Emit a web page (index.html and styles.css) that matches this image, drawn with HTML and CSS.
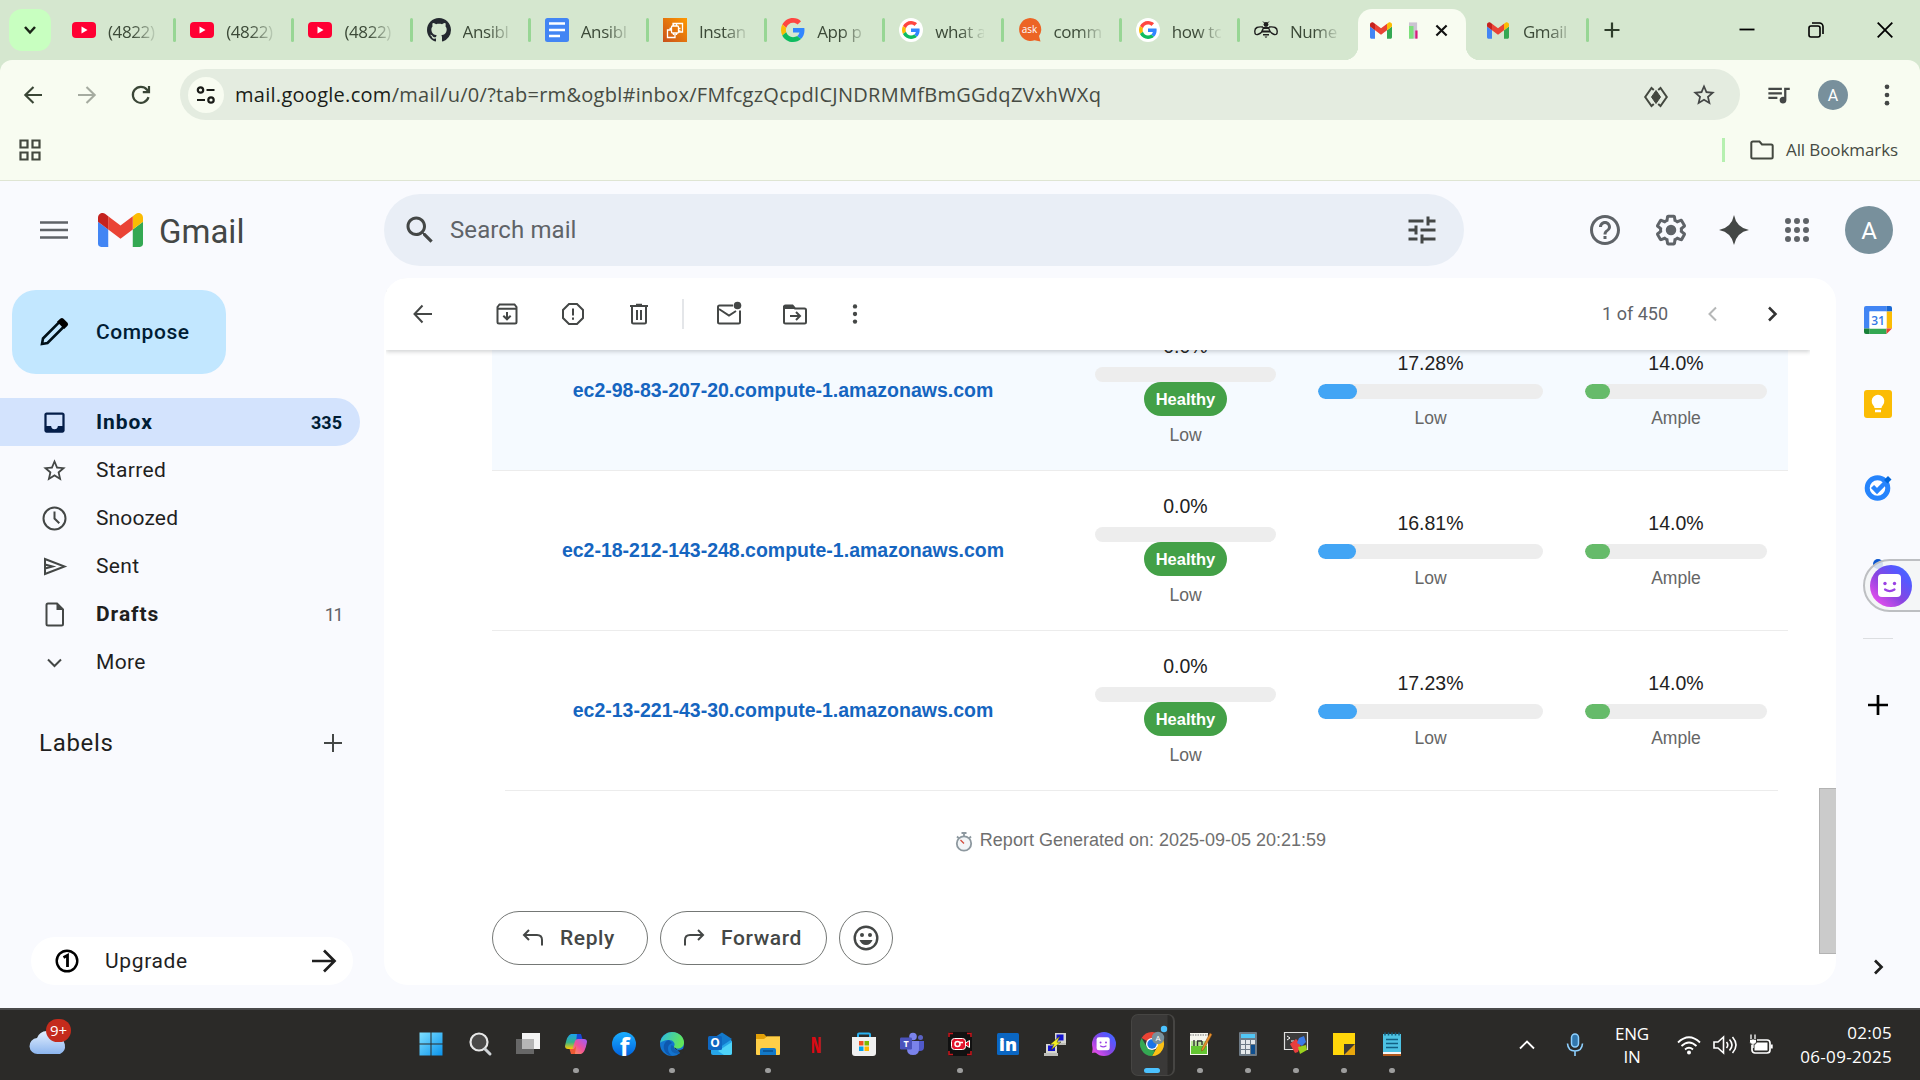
FILE: index.html
```html
<!DOCTYPE html>
<html lang="en">
<head>
<meta charset="utf-8">
<title>Gmail</title>
<link rel="stylesheet" href="styles.css">
</head>
<body>
<svg class="defs" aria-hidden="true">
  <symbol id="youtube" viewBox="0 0 24 16"><rect width="24" height="16" rx="4" fill="#ff0033"/><path d="M9.500 4.500v7l6-3.500z" fill="#fff"/></symbol>
  <symbol id="google" viewBox="0 0 48 48"><path fill="#ff4641" d="M24 9.500c3.540 0 6.710 1.220 9.210 3.600l6.850-6.850C35.900 2.380 30.470 0 24 0 14.620 0 6.510 5.380 2.560 13.220l7.980 6.190C12.430 13.720 17.740 9.500 24 9.500z"/><path fill="#3186ff" d="M46.980 24.550c0-1.570-.15-3.090-.38-4.550H24v9.020h12.940c-.58 2.960-2.260 5.480-4.780 7.180l7.730 6c4.510-4.180 7.090-10.360 7.090-17.650z"/><path fill="#fbbc05" d="M10.530 28.590c-.48-1.450-.76-2.990-.76-4.590s.27-3.140.76-4.590l-7.980-6.190C.92 16.460 0 20.120 0 24c0 3.880.92 7.540 2.560 10.780l7.970-6.190z"/><path fill="#0ebc5f" d="M24 48c6.480 0 11.930-2.130 15.890-5.810l-7.730-6c-2.150 1.450-4.920 2.300-8.160 2.300-6.260 0-11.570-4.220-13.470-9.910l-7.980 6.190C6.510 42.620 14.620 48 24 48z"/></symbol>
  <symbol id="google-round" viewBox="0 0 24 24"><circle cx="12" cy="12" r="12" fill="#fff"/><use href="#google" x="3" y="3" width="18" height="18"/></symbol>
  <symbol id="gmail" viewBox="52 42 88 66"><path fill="#4285f4" d="M58 108h14V74L52 59v43c0 3.320 2.690 6 6 6"/><path fill="#34a853" d="M120 108h14c3.320 0 6-2.690 6-6V59l-20 15"/><path fill="#fbbc04" d="M120 48v26l20-15v-8c0-7.420-8.470-11.650-14.400-7.200"/><path fill="#ea4335" d="M72 74V48l24 18 24-18v26L96 92"/><path fill="#c5221f" d="M52 51v8l20 15V48l-5.600-4.200c-5.940-4.450-14.400-.22-14.400 7.200"/></symbol>
  <symbol id="star" viewBox="0 0 24 24"><path d="M22 9.240l-7.190-.62L12 2 9.190 8.630 2 9.240l5.460 4.730L5.820 21 12 17.270 18.180 21l-1.630-7.030L22 9.240zM12 15.400l-3.760 2.270 1-4.280-3.320-2.880 4.380-.38L12 6.100l1.710 4.040 4.380.38-3.320 2.880 1 4.280L12 15.400z"/></symbol>
  <symbol id="kebab" viewBox="0 0 24 24"><circle cx="12" cy="5" r="2"/><circle cx="12" cy="12" r="2"/><circle cx="12" cy="19" r="2"/></symbol>
  <symbol id="assistant" viewBox="0 0 42 42"><linearGradient id="asg" x1="0" y1="1" x2="1" y2="0"><stop offset=".08" stop-color="#f04fee"/><stop offset=".45" stop-color="#8a45e0"/><stop offset=".75" stop-color="#5658ff"/><stop offset="1" stop-color="#3a76ff"/></linearGradient><circle cx="21" cy="21" r="21" fill="url(#asg)"/><rect x="8" y="9" width="23" height="23" rx="4" fill="#fff"/><g fill="#9a42e4"><circle cx="15" cy="18.500" r="1.700"/><circle cx="24.500" cy="18.500" r="1.700"/></g><path d="M15 24.500q4.700 3.200 9.500 0" fill="none" stroke="#9a42e4" stroke-width="2.200" stroke-linecap="round"/></symbol>
</svg>

<div class="tabstrip">
  <div class="tab-search"><svg width="16" height="16" viewBox="0 0 16 16" class="line"><path d="M3 5l5 5.500L13 5" stroke="#1a2417" stroke-width="2.500"/></svg></div>
  <div class="tab"><svg class="fav"><use href="#youtube" y="4" height="16"/></svg><span>(4822)</span></div>
  <div class="tab"><svg class="fav"><use href="#youtube" y="4" height="16"/></svg><span>(4822)</span></div>
  <div class="tab"><svg class="fav"><use href="#youtube" y="4" height="16"/></svg><span>(4822)</span></div>
  <div class="tab"><svg class="fav" viewBox="0 0 16 16"><path fill="#24292f" d="M8 0C3.580 0 0 3.580 0 8c0 3.540 2.290 6.530 5.470 7.590.4.070.55-.17.55-.38 0-.19-.01-.82-.01-1.490-2.010.37-2.530-.49-2.690-.94-.09-.23-.48-.94-.82-1.130-.28-.15-.68-.52-.01-.53.63-.01 1.080.58 1.230.82.72 1.210 1.870.87 2.330.66.07-.52.28-.87.51-1.070-1.780-.2-3.640-.89-3.640-3.950 0-.87.31-1.590.82-2.150-.08-.2-.36-1.020.08-2.120 0 0 .67-.21 2.200.82.64-.18 1.320-.27 2-.27.68 0 1.360.09 2 .27 1.530-1.040 2.200-.82 2.200-.82.44 1.100.16 1.920.08 2.120.51.56.82 1.270.82 2.150 0 3.070-1.870 3.750-3.650 3.950.29.25.54.73.54 1.480 0 1.070-.01 1.930-.01 2.200 0 .21.15.46.55.38A8.010 8.010 0 0 0 16 8c0-4.420-3.580-8-8-8z"/></svg><span>Ansibl</span></div>
  <div class="tab"><svg class="fav" viewBox="0 0 24 24"><rect width="24" height="24" rx="2.500" fill="#4285f4"/><path d="M4 5.500h16M4 12h16M4 18h11" stroke="#fff" stroke-width="2.600"/></svg><span>Ansibl</span></div>
  <div class="tab"><svg class="fav" viewBox="0 0 24 24"><linearGradient id="ec2" x1="0" y1="1" x2="1" y2="0"><stop stop-color="#c8511b"/><stop offset="1" stop-color="#f90"/></linearGradient><rect width="24" height="24" fill="url(#ec2)"/><g fill="none" stroke="#fff" stroke-width="1.300"><rect x="8.500" y="8" width="7" height="7" rx="1"/><path d="M10 8V5.500h9.500V14H16M8 12H4.500v7.500H12V16M10.500 6v2m3-2v2m-3 7v2m3-2v2M6.500 10.500h2m7 0h2m-2 2.500h2"/></g></svg><span>Instan</span></div>
  <div class="tab"><svg class="fav"><use href="#google"/></svg><span>App p</span></div>
  <div class="tab"><svg class="fav"><use href="#google-round"/></svg><span>what a</span></div>
  <div class="tab"><svg class="fav" viewBox="0 0 24 24"><path d="M12 0a11.300 11.300 0 0 1 9 18l1.500 5.500-6-1.200A11.500 11.500 0 1 1 12 0z" fill="#ec6424"/><text x="11.500" y="15" text-anchor="middle" class="ic-text" font-size="10" fill="#fff">ask</text></svg><span>comm</span></div>
  <div class="tab"><svg class="fav"><use href="#google-round"/></svg><span>how to</span></div>
  <div class="tab before-active"><svg class="fav" viewBox="0 0 24 24"><g fill="none" stroke="#1f1f1f" stroke-width="1.400"><path d="M9 9Q1 8 .8 13t4 3Q8 15 9 11M15 9q8-1 8.200 4t-4 3q-3-1-4.200-5"/></g><g fill="#1f1f1f"><circle cx="12" cy="6.500" r="2.400"/><path d="M8.500 9h7v2h-7zM8 12.500h8v2H8zM9 16h6v1.500H9zM10.500 18.500h3L12 20z"/><path d="M9 3.500l2 2M15 3.500l-2 2" stroke="#1f1f1f"/></g></svg><span>Nume</span></div>
  <div class="tab active"><svg width="22" height="17"><use href="#gmail"/></svg><svg class="chart" width="9" height="19" viewBox="0 0 10 20"><path fill="#cbc3d2" d="M0 1h9v18H0z"/><path fill="#7be07b" d="M0 5h5v14H0z"/><path fill="#d81b7a" d="M7 10h2.500v9H7z"/></svg><svg width="13" height="13" viewBox="0 0 14 14" class="line"><path d="M1.500 1.500l11 11m0-11l-11 11" stroke="#111" stroke-width="2.300"/></svg></div>
  <div class="tab last"><svg width="22" height="17"><use href="#gmail"/></svg><span>Gmail</span></div>
  <div class="new-tab"><svg width="16" height="16" viewBox="0 0 16 16" class="line"><path d="M8 .5v15M.5 8h15" stroke="#2e3d2b" stroke-width="2.200"/></svg></div>
  <div class="window-controls">
    <svg width="16" height="16" viewBox="0 0 16 16" class="line"><path d="M.5 7.500h15" stroke="#000" stroke-width="1.800"/></svg>
    <svg width="16" height="16" viewBox="0 0 16 16" class="line"><rect x="1" y="4" width="11" height="11" rx="2" stroke="#000" stroke-width="1.600"/><path d="M4 1h7.500a3.500 3.500 0 0 1 3.500 3.500V12" stroke="#000" stroke-width="1.600"/></svg>
    <svg width="16" height="16" viewBox="0 0 16 16" class="line"><path d="M.7.7l14.600 14.600m0-14.600L.7 15.300" stroke="#000" stroke-width="1.800"/></svg>
  </div>
</div>

<div class="browser-bar">
  <div class="address-row">
    <div class="nav">
      <svg width="20" height="20" viewBox="0 0 20 20" class="line"><path d="M19 10H3M10.500 2L2.300 10l8.200 8" stroke="#3a4636" stroke-width="2.100"/></svg>
      <svg width="20" height="20" viewBox="0 0 20 20" class="line"><path d="M1 10h16M9.500 2l8.200 8-8.200 8" stroke="#a5aba0" stroke-width="2.100"/></svg>
      <svg width="20" height="20" viewBox="0 0 20 20" class="line"><path d="M17.500 12.200A8 8 0 1 1 16 4.700l1.800 2.300M18 1v6.200h-6.200" stroke="#3a4636" stroke-width="2.200"/></svg>
    </div>
    <div class="omnibox">
      <div class="site-info"><svg width="20" height="20" viewBox="0 0 20 20" class="line"><g stroke="#1a1c18" stroke-width="2.200"><circle cx="4.500" cy="5" r="2.700"/><path d="M10.500 5h8M1 15h8"/><circle cx="15" cy="15" r="2.700"/></g></svg></div>
      <div class="url"><b>mail.google.com</b>/mail/u/0/?tab=rm&amp;ogbl#inbox/FMfcgzQcpdlCJNDRMMfBmGGdqZVxhWXq</div>
      <svg width="24" height="20" viewBox="0 0 24 20" class="line"><path d="M12 3.500l4.500 6.500-4.500 6.500L7.500 10z" fill="#43483f" stroke="#43483f"/><path d="M9.800 3L7.500 1 1.200 10l6.300 9 2.300-2M14.200 3l2.300-2 6.300 9-6.300 9-2.300-2" stroke="#43483f" stroke-width="2"/></svg>
      <svg class="fill" width="26" height="26"><use href="#star"/></svg>
    </div>
    <svg class="fill music" width="27" height="27" viewBox="0 0 24 24"><path d="M15 6H3v2h12V6zm0 4H3v2h12v-2zM3 16h8v-2H3v2zM17 6v8.180c-.31-.11-.65-.18-1-.18-1.660 0-3 1.340-3 3s1.340 3 3 3 3-1.340 3-3V8h3V6h-5z"/></svg>
    <div class="profile">A</div>
    <svg class="fill" width="28" height="28"><use href="#kebab"/></svg>
  </div>
  <div class="bookmarks">
    <svg width="22" height="22" viewBox="0 0 22 22" class="line"><path d="M1.500 1.500h7v7h-7zM13.500 1.500h7v7h-7zM1.500 13.500h7v7h-7zM13.500 13.500h7v7h-7z" stroke="#43483f" stroke-width="2.200"/></svg>
    <div class="all-bookmarks"><svg width="24" height="20" viewBox="0 0 24 20" class="line"><path d="M3 1.500h6.500l2.500 3h9.200q1.500 0 1.500 1.500v11q0 1.500-1.500 1.500H3q-1.700 0-1.700-1.500V3q0-1.500 1.700-1.500z" stroke="#43483f" stroke-width="2"/></svg><span>All Bookmarks</span></div>
  </div>
</div>

<div class="gmail">
  <div class="header">
    <svg class="menu line" width="28" height="18" viewBox="0 0 28 18"><path d="M0 1.500h28M0 9h28M0 16.500h28" stroke="#5f6368" stroke-width="2.700"/></svg>
    <svg class="logo" width="45" height="34"><use href="#gmail"/></svg>
    <span class="brand">Gmail</span>
    <div class="search">
      <svg class="fill" width="36" height="36" viewBox="0 0 24 24"><path d="M15.500 14h-.79l-.28-.27C15.410 12.590 16 11.110 16 9.500 16 5.910 13.090 3 9.500 3S3 5.910 3 9.500 5.910 16 9.500 16c1.610 0 3.090-.59 4.230-1.570l.27.28v.79l5 4.990L20.490 19l-4.990-5zm-6 0C7.010 14 5 11.990 5 9.500S7.010 5 9.500 5 14 7.010 14 9.500 11.990 14 9.500 14z"/></svg>
      <span>Search mail</span>
      <svg class="fill" width="36" height="36" viewBox="0 0 24 24"><path d="M3 17v2h6v-2H3zM3 5v2h10V5H3zm10 16v-2h8v-2h-8v-2h-2v6h2zM7 9v2H3v2h4v2h2V9H7zm14 4v-2H11v2h10zm-6-4h2V7h4V5h-4V3h-2v6z"/></svg>
    </div>
    <div class="header-actions">
      <svg width="36" height="36" viewBox="0 0 24 24"><path d="M11 18h2v-2h-2v2zm1-16C6.480 2 2 6.480 2 12s4.480 10 10 10 10-4.480 10-10S17.520 2 12 2zm0 18c-4.410 0-8-3.590-8-8s3.590-8 8-8 8 3.590 8 8-3.590 8-8 8zm0-14c-2.210 0-4 1.790-4 4h2c0-1.100.9-2 2-2s2 .9 2 2c0 2-3 1.750-3 5h2c0-2.250 3-2.500 3-5 0-2.210-1.790-4-4-4z"/></svg>
      <svg class="gear" width="36" height="36" viewBox="0 0 24 24"><path d="M13.850 22.250h-3.700c-.74 0-1.360-.54-1.450-1.270l-.27-1.890c-.27-.14-.53-.29-.79-.46l-1.800.72c-.7.26-1.470-.03-1.810-.65L2.200 15.530c-.35-.66-.2-1.440.36-1.880l1.530-1.190c-.01-.15-.02-.3-.02-.46 0-.15.01-.31.02-.46l-1.520-1.190c-.59-.45-.74-1.260-.37-1.880l1.850-3.190c.34-.62 1.110-.9 1.790-.63l1.810.73c.26-.17.52-.32.78-.46l.27-1.910c.09-.7.71-1.250 1.440-1.250h3.700c.74 0 1.360.54 1.450 1.270l.27 1.890c.27.14.53.29.79.46l1.800-.72c.71-.26 1.480.03 1.820.65l1.840 3.180c.36.66.2 1.440-.36 1.880l-1.520 1.190c.01.15.02.3.02.46s-.01.31-.02.46l1.520 1.190c.56.45.72 1.230.37 1.860l-1.860 3.220c-.34.62-1.110.9-1.800.63l-1.800-.72c-.26.17-.52.32-.78.46l-.27 1.910c-.1.68-.72 1.220-1.460 1.220zm-3.230-2h2.760l.37-2.550.53-.22c.44-.18.88-.44 1.340-.78l.45-.34 2.380.96 1.380-2.400-2.030-1.580.07-.56c.03-.26.06-.51.06-.78s-.03-.53-.06-.78l-.07-.56 2.030-1.580-1.390-2.400-2.390.96-.45-.35c-.42-.32-.87-.58-1.330-.77l-.52-.22-.37-2.550h-2.760l-.37 2.550-.53.21c-.44.19-.88.44-1.340.79l-.45.33-2.380-.95-1.390 2.390 2.030 1.580-.07.56a7 7 0 0 0-.06.79c0 .26.02.53.06.78l.07.56-2.030 1.580 1.380 2.400 2.390-.96.45.35c.43.33.86.58 1.330.77l.53.22.38 2.550z"/><circle cx="12" cy="12" r="3.500"/></svg>
      <svg width="36" height="36" viewBox="0 0 24 24"><path fill="#444746" d="M12 2q1.600 8.400 10 10-8.400 1.600-10 10-1.600-8.400-10-10Q10.400 10.400 12 2z"/></svg>
      <svg width="36" height="36" viewBox="0 0 24 24"><g stroke="#5f6368" stroke-width="4" stroke-linecap="round"><path d="M6 6h0M12 6h0M18 6h0M6 12h0M12 12h0M18 12h0M6 18h0M12 18h0M18 18h0"/></g></svg>
    </div>
    <div class="avatar">A</div>
  </div>

  <div class="body">
    <div class="sidebar">
      <div class="compose"><svg width="30" height="30" viewBox="0 0 30 30"><path d="M3 27l1-5.500L20.800 4.700l4.500 4.500L8.500 26z" fill="none" stroke="#001018" stroke-width="2.600"/><path d="M18 4.800L21.500 1.500q1.500-1 3 .2l4 4q1.300 1.600 0 3L25.200 12z"/></svg><span>Compose</span></div>
      <div class="item selected"><svg width="27" height="27" viewBox="0 0 24 24"><path fill="#041e49" d="M19 3H4.990c-1.110 0-1.980.89-1.980 2L3 19c0 1.100.88 2 1.990 2H19c1.100 0 2-.9 2-2V5c0-1.110-.9-2-2-2zm0 12h-4c0 1.660-1.350 3-3 3s-3-1.340-3-3H4.990V5H19v10z"/></svg><span>Inbox</span><i>335</i></div>
      <div class="item"><svg class="fill" width="27" height="27"><use href="#star"/></svg><span>Starred</span></div>
      <div class="item snoozed"><svg width="27" height="27" viewBox="0 0 27 27" class="line ink"><circle cx="13.500" cy="13.500" r="11"/><path d="M13.500 6.500v7l4.800 4.800"/></svg><span>Snoozed</span></div>
      <div class="item"><svg width="27" height="27" viewBox="0 0 27 27" class="line ink"><path d="M4 6v15l19.500-7.500zM4 11.500l7.500 2L4 15.500"/></svg><span>Sent</span></div>
      <div class="item drafts"><svg width="27" height="27" viewBox="0 0 27 27" class="line ink"><path d="M7 2.500h9l6 6V23q0 1.500-1.500 1.500h-13.500Q5.500 24.500 5.500 23V4q0-1.500 1.500-1.500z"/><path d="M15.500 2.500v6.500H22z" fill="#444746" stroke="none"/></svg><span>Drafts</span><i>11</i></div>
      <div class="item"><svg width="27" height="27" viewBox="0 0 27 27" class="line ink"><path d="M7 10.500l6.500 6.500 6.500-6.500"/></svg><span>More</span></div>
      <div class="labels"><span>Labels</span><svg width="18" height="18" viewBox="0 0 18 18" class="line ink"><path d="M9 0v18M0 9h18"/></svg></div>
      <div class="upgrade"><svg width="24" height="24" viewBox="0 0 24 24" class="line"><circle cx="12" cy="12" r="10.300" stroke="#000" stroke-width="2.400"/><path d="M8.500 8.500l4-2.200V18" stroke="#000" stroke-width="2.800"/></svg><span>Upgrade</span><svg width="24" height="24" viewBox="0 0 24 24" class="line"><path d="M0 12h22M12 1.500L22.500 12 12 22.500" stroke="#1f1f1f" stroke-width="2.700"/></svg></div>
    </div>

    <div class="panel">
      <div class="mail-toolbar">
        <svg width="24" height="24" viewBox="0 0 24 24" class="line ink"><path d="M21 12H4M11.500 3.500L3.500 12l8 8.500"/></svg>
        <svg class="archive line ink" width="24" height="24" viewBox="0 0 24 24"><path d="M2.500 5l2-2.500h15l2 2.500v15q0 1.500-1.500 1.500H4q-1.500 0-1.500-1.500zM2.500 6.700h19M12 10v7M8.300 13.700L12 17.300l3.700-3.600"/></svg>
        <svg width="24" height="24" viewBox="0 0 24 24" class="line ink"><path d="M8 2h8l6 6v8l-6 6H8l-6-6V8z"/><path d="M12 6.500v7M12 15.500v2.300"/></svg>
        <svg width="24" height="24" viewBox="0 0 24 24" class="line ink"><path d="M3 4h18M9 2.800h6M5 4.500V20q0 1.500 1.500 1.500h11q1.500 0 1.500-1.500V4.500M10 8v10M14 8v10"/></svg>
        <i class="divider"></i>
        <svg width="26" height="26" viewBox="0 0 26 26" class="line ink"><path d="M17 4.500H3.500q-1.500 0-1.500 1.500v15q0 1.500 1.500 1.500h19q1.500 0 1.500-1.500V9.500M3 8l10 6.500L20 10"/><circle cx="21.500" cy="4.500" r="3.800" fill="#444746" stroke="none"/></svg>
        <svg class="move line ink" width="26" height="26" viewBox="0 0 26 26"><path d="M2 5v16q0 1.500 1.500 1.500h19q1.500 0 1.500-1.500V9q0-1.500-1.500-1.500H13L10.500 4.500h-7Q2 4.500 2 6z"/><path d="M2 4h8.500l3 4H2z" fill="#444746" stroke="none"/><path d="M8 15h9.500M14 11l4 4-4 4"/></svg>
        <svg class="fill" width="26" height="26"><use href="#kebab"/></svg>
        <span class="count">1 of 450</span>
        <svg width="20" height="20" viewBox="0 0 20 20" class="line"><path d="M13 3.500L6.500 10l6.500 6.500" stroke="#b5b7b7" stroke-width="2"/></svg>
        <svg class="next line" width="20" height="20" viewBox="0 0 20 20"><path d="M7 3.500l6.500 6.500L7 16.500" stroke="#333" stroke-width="2.500"/></svg>
      </div>
      <div class="message">
        <div class="report">
          <div class="row shaded">
            <div class="host">ec2-98-83-207-20.compute-1.amazonaws.com</div>
            <div class="metric"><p>0.0%</p><div class="bar"></div><em>Healthy</em><small>Low</small></div>
            <div class="metric"><p>17.28%</p><div class="bar"><div class="blue" style="width:17.280%"></div></div><small>Low</small></div>
            <div class="metric"><p>14.0%</p><div class="bar"><div class="green" style="width:14%"></div></div><small>Ample</small></div>
          </div>
          <div class="row">
            <div class="host">ec2-18-212-143-248.compute-1.amazonaws.com</div>
            <div class="metric"><p>0.0%</p><div class="bar"></div><em>Healthy</em><small>Low</small></div>
            <div class="metric"><p>16.81%</p><div class="bar"><div class="blue" style="width:16.810%"></div></div><small>Low</small></div>
            <div class="metric"><p>14.0%</p><div class="bar"><div class="green" style="width:14%"></div></div><small>Ample</small></div>
          </div>
          <div class="row final">
            <div class="host">ec2-13-221-43-30.compute-1.amazonaws.com</div>
            <div class="metric"><p>0.0%</p><div class="bar"></div><em>Healthy</em><small>Low</small></div>
            <div class="metric"><p>17.23%</p><div class="bar"><div class="blue" style="width:17.230%"></div></div><small>Low</small></div>
            <div class="metric"><p>14.0%</p><div class="bar"><div class="green" style="width:14%"></div></div><small>Ample</small></div>
          </div>
          <div class="rule"></div>
        </div>
        <div class="generated"><svg width="20" height="20" viewBox="0 0 20 20" class="line"><circle cx="10" cy="11.500" r="7.200" fill="#f2f5f7" stroke="#8d989f" stroke-width="1.800"/><path d="M10 4V1M7.500 1h5M3 4.500l1.700 1.700M17 4.500l-1.700 1.700" stroke="#8d989f" stroke-width="1.800"/><path d="M10 11.500L6.500 8" stroke="#d34a3a" stroke-width="1.300"/></svg><span>Report Generated on: 2025-09-05 20:21:59</span></div>
        <div class="actions">
          <div class="button reply"><svg width="24" height="24" viewBox="0 0 24 24" class="line ink"><path d="M8 4L3 9l5 5M3.500 9H16q5 0 5 5v5.500"/></svg><span>Reply</span></div>
          <div class="button forward"><svg width="24" height="24" viewBox="0 0 24 24" class="line ink"><path d="M16 4l5 5-5 5M20.500 9H8q-5 0-5 5v5.500"/></svg><span>Forward</span></div>
          <div class="button emoji"><svg width="26" height="26" viewBox="0 0 26 26" class="line"><circle cx="13" cy="13" r="11.300" stroke="#444746" stroke-width="2.400"/><g fill="#444746"><circle cx="9" cy="10" r="2"/><circle cx="17" cy="10" r="2"/><path d="M6.500 15h13q-2 5-6.500 5t-6.500-5z"/></g></svg></div>
        </div>
        <div class="scrollbar"></div>
      </div>
    </div>

    <div class="sidepanel">
      <svg width="28" height="28" viewBox="0 0 28 28"><path fill="#4285f4" d="M2 0h20.500v5.500h-17v17H0V2q0-2 2-2z"/><path fill="#1967d2" d="M22.500 0H26q2 0 2 2v3.500h-5.500z"/><path fill="#fbbc04" d="M22.500 5.500H28v17h-5.500z"/><path fill="#34a853" d="M5.500 22.500h17V28h-17z"/><path fill="#188038" d="M0 22.500h5.500V28H2q-2 0-2-2z"/><path fill="#ea4335" d="M22.500 28v-5.500H28z"/><path fill="#fff" d="M5.500 5.500h17v17h-17z"/><text x="14" y="18.500" text-anchor="middle" class="ic-text" font-weight="600" font-size="12" fill="#3478e5">31</text></svg>
      <svg width="28" height="28" viewBox="0 0 28 28"><rect width="28" height="28" rx="3" fill="#fbbc04"/><path d="M10.500 18q0-1.500-1.500-3a6.300 6.300 0 1 1 10 0q-1.500 1.500-1.500 3zM11 19.800h6v2.400h-6z" fill="#fff"/></svg>
      <svg class="tasks line" width="28" height="28" viewBox="0 0 28 28"><circle cx="13.500" cy="15" r="10.300" stroke="#2684fc" stroke-width="5" fill="#fff"/><path d="M8.500 13.500l4.500 4.500 10-10" stroke="#2684fc" stroke-width="4.500"/><path d="M20 7l4-4 3.500 3.500-4 4z" fill="#0066da"/></svg>
      <div class="contacts"><i></i><div class="float"><svg width="42" height="42"><use href="#assistant"/></svg></div></div>
      <hr>
      <svg class="add line" width="20" height="20" viewBox="0 0 20 20"><path d="M10 0v20M0 10h20" stroke="#000" stroke-width="2.700"/></svg>
      <svg class="hide line" width="18" height="18" viewBox="0 0 18 18"><path d="M6 2.500L12.500 9 6 15.500" stroke="#1f1f1f" stroke-width="2.700"/></svg>
    </div>
  </div>
</div>

<div class="taskbar">
  <div class="weather"><svg width="40" height="32" viewBox="0 0 40 32"><linearGradient id="cl" x1="0" y1="0" x2="0" y2="1"><stop stop-color="#e3efff"/><stop offset="1" stop-color="#8cb5ee"/></linearGradient><path d="M9 28a8 8 0 0 1-1-16 11 11 0 0 1 20-1 9 9 0 0 1 3 17z" fill="url(#cl)"/></svg><b>9+</b></div>
  <div class="apps">
    <div class="app start"><svg viewBox="0 0 24 24"><linearGradient id="wn" x1="0" y1="0" x2="1" y2="1"><stop stop-color="#7fe0ff"/><stop offset="1" stop-color="#0a93ec"/></linearGradient><path d="M.5.500h11v11H.5zM12.500.500h11v11h-11zM.5 12.500h11v11H.5zM12.500 12.500h11v11h-11z" fill="url(#wn)"/></svg></div>
    <div class="app"><svg viewBox="0 0 24 24"><circle cx="11" cy="10" r="8.500" fill="#4b4a49" stroke="#e8e8e8" stroke-width="2.200"/><path d="M17 17l5 5" stroke="#cfd3d6" stroke-width="3" stroke-linecap="round"/></svg></div>
    <div class="app"><svg viewBox="0 0 24 24"><path d="M6 1h18v16H6z" fill="#f3f3f3"/><path d="M0 7h18v15H0z" fill="#707070" opacity=".88"/><path d="M6 7h12v10H6z" fill="#b5b5b5"/></svg></div>
    <div class="app dot"><svg viewBox="0 0 24 24"><linearGradient id="cpa" x1="0" y1="0" x2="0" y2="1"><stop stop-color="#1aa2ee"/><stop offset=".55" stop-color="#38b48a"/><stop offset="1" stop-color="#ffc900"/></linearGradient><linearGradient id="cpb" x1="1" y1="0" x2="0" y2="1"><stop stop-color="#9a5cff"/><stop offset=".5" stop-color="#f0519a"/><stop offset="1" stop-color="#ffa34d"/></linearGradient><path d="M7 2h10l-4 13q-.8 2-3 2H4q-3 0-3-3 2-11 6-12z" fill="url(#cpa)"/><path d="M13 2h4l1.500 5H14l-2 3z" fill="#1648d8"/><path d="M17 22H7l4-13q.8-2 3-2h6q3 0 3 3-2 11-6 12z" fill="url(#cpb)"/><path d="M11 22H7l-1.500-5H10l2-3z" fill="#ee5a34"/></svg></div>
    <div class="app"><svg viewBox="0 0 24 24"><linearGradient id="fb" x1="0" y1="0" x2="0" y2="1"><stop stop-color="#1aafff"/><stop offset="1" stop-color="#0163e0"/></linearGradient><circle cx="12" cy="12" r="12" fill="url(#fb)"/><text x="12.500" y="24" text-anchor="middle" class="ic-text" font-weight="700" font-size="25" fill="#fff">f</text></svg></div>
    <div class="app dot"><svg viewBox="0 0 24 24"><linearGradient id="ed" x1="0" y1="0" x2="1" y2=".3"><stop stop-color="#2bb9e8"/><stop offset="1" stop-color="#62e65a"/></linearGradient><circle cx="12" cy="12" r="12" fill="#1374cf"/><path d="M.2 11A12 12 0 0 1 12 0c8 0 12 6 12 10.500 0 4-3 6-6.500 6-3 0-4-1-3.500-2 2-3-1-6.500-5-6.500-5 0-8 2-8.800 3z" fill="url(#ed)"/><path d="M9 8c-4 1-6 5-5 9s5 7 9 7c-3-1-5-4-5-7 0-4 2-5 4-6z" fill="#0e58ae"/><path d="M14 14.500c-.5 2 1 4 4 4 2 0 4-1 5-2L20.500 21q-4 2-8-1-3-3-1-7z" fill="#1160b4"/><path d="M14.500 15c0 2 1.500 3.200 4 3.200 2 0 3.500-.7 4.700-1.500l.8 3-3 2z" fill="#2b2a28"/></svg></div>
    <div class="app"><svg viewBox="0 0 24 24"><path d="M3 10L14 1l10 8v12q0 2-2 2H5q-2 0-2-2z" fill="#26a5e8"/><path d="M7 5l7-4.500L24 7 11 16z" fill="#1379cc"/><path d="M24 10L10 19l6 4h6q2 0 2-2z" fill="#4ed3f8"/><rect y="4" width="14" height="14" rx="1.500" fill="#0f67c1"/><text x="7" y="15.300" text-anchor="middle" class="ic-text" font-weight="700" font-size="12" fill="#fff">O</text></svg></div>
    <div class="app dot"><svg viewBox="0 0 24 24"><path d="M0 2h8l2.500 2.500H24V12H0z" fill="#e2a008"/><path d="M0 7h8l3-2.500h13V22q0 1-1 1H1q-1 0-1-1z" fill="#ffcf48"/><path d="M4 23v-5q0-2 2-2h12q2 0 2 2v5z" fill="#1279c9"/><path d="M7 19h10" stroke="#0a4f8c" stroke-width="1.500"/></svg></div>
    <div class="app"><svg viewBox="0 0 24 24"><text transform="scale(.55 1)" x="22" y="20.500" text-anchor="middle" class="ic-text" font-weight="800" font-size="23" fill="#d90a14">N</text></svg></div>
    <div class="app"><svg viewBox="0 0 24 24"><path d="M6 7V2.500q0-1 1-1h10q1 0 1 1V7" fill="none" stroke="#29b2f2" stroke-width="2"/><path d="M0 5h24v16q0 3-3 3H3q-3 0-3-3z" fill="#f0f0f0"/><path d="M7 9h4.500v4.500H7z" fill="#f25022"/><path d="M12.500 9H17v4.500h-4.500z" fill="#7fba00"/><path d="M7 14.500h4.500V19H7z" fill="#00a4ef"/><path d="M12.500 14.500H17V19h-4.500z" fill="#ffb900"/></svg></div>
    <div class="app"><svg viewBox="0 0 24 24"><circle cx="13" cy="4.500" r="3.800" fill="#7b83eb"/><circle cx="20.500" cy="5.500" r="2.500" fill="#5a62c3"/><path d="M17 9h7v6q0 4-4 4h-3z" fill="#5059c9"/><path d="M7 9h12v8q0 6-6 6t-6-6z" fill="#7b83eb"/><rect y="5.500" width="12" height="12" rx="1.200" fill="#4b53bc"/><text x="6" y="15" text-anchor="middle" class="ic-text" font-weight="700" font-size="9" fill="#fff">T</text></svg></div>
    <div class="app dot"><svg viewBox="0 0 24 24"><rect width="24" height="24" rx="2.500" fill="#111"/><path d="M1 5V1.500h4M19 1.500h4V5M1 19v3.500h4M19 22.500h4V19" fill="none" stroke="#c4161c" stroke-width="1.600"/><rect x="3.500" y="6.500" width="14" height="11" rx="3" fill="#e3142d" stroke="#fff"/><path d="M17.500 11l4-2.500v7l-4-2.500z" fill="#e3142d" stroke="#fff"/><circle cx="9.500" cy="12" r="2.500" fill="none" stroke="#fff" stroke-width="1.500"/><path d="M12 10.500h3" stroke="#fff" stroke-width="1.500"/></svg></div>
    <div class="app"><svg viewBox="0 0 24 24"><rect x="1" y="1" width="22" height="22" rx="1.500" fill="#0a66c2"/><text x="12" y="19" text-anchor="middle" class="ic-text" font-weight="800" font-size="18" fill="#fff">in</text></svg></div>
    <div class="app"><svg viewBox="0 0 24 24"><path d="M11 1h11v10H11zM2 12h11v9H2z" fill="#d5d5d0"/><path d="M12.500 2.500h7v6h-7zM4 13.500h7v5.500H4z" fill="#1212cf"/><path d="M10 11h12v2H10zM0 21h14v3H0z" fill="#bdbdb8"/><path d="M16 4L6 12.500l4-.2L7 18l10-8-4 .2z" fill="#f4ee22" stroke="#222" stroke-width=".5"/></svg></div>
    <div class="app"><svg viewBox="0 0 24 24"><path d="M1 14l-1 7 8-1z" fill="#d44bd9"/><use href="#assistant" width="24" height="24"/></svg></div>
    <div class="app current"><svg viewBox="0 0 24 24"><path d="M12 12L1.600 6A12 12 0 0 1 22.400 6z" fill="#ea4335"/><path d="M12 24l5.200-9L12 6h10.400A12 12 0 0 1 12 24z" fill="#fbc116"/><path d="M1.600 6l5.200 9 5.200 3 3 .8L12 24A12 12 0 0 1 1.600 6z" fill="#34a853"/><circle cx="12" cy="12" r="6" fill="#fff"/><circle cx="12" cy="12" r="4.700" fill="#1a73e8"/><circle cx="18" cy="6" r="6.200" fill="#78909c"/><text x="18" y="8.700" text-anchor="middle" class="ic-text" font-size="8" fill="#fff">A</text><circle cx="24" cy="-3" r="3.200" fill="#4cc2ff"/></svg></div>
    <div class="app dot"><svg viewBox="0 0 24 24"><path d="M2 1h18v22H2z" fill="#f6f6ee"/><path d="M3 9h16v13H3z" fill="#62c531"/><path d="M3 9h16v5H3z" fill="#b9e59a"/><path d="M6 8v6M9.500 9v5M14 9v4M9 9h5" stroke="#333" stroke-width="1.400"/><path d="M2 3h18" stroke="#777" stroke-dasharray="1.500 1"/><path d="M22 1l2 1.500L15.500 18l-2 1 .3-2.500z" fill="#e8902c" stroke="#7d4b16" stroke-width=".5"/></svg></div>
    <div class="app dot"><svg viewBox="0 0 24 24"><rect x="3" width="18" height="24" rx="1" fill="#6e7b87"/><path d="M5 2h14v4H5z" fill="#52c7f5"/><path d="M5 8h4v4H5zm5 0h4v4h-4zm5 0h4v4h-4zM5 13h4v4H5zm5 0h4v4h-4zM5 18h4v4H5zm5 0h4v4h-4z" fill="#e4e8eb"/><path d="M15 13h4v9h-4z" fill="#0f4f8f"/></svg></div>
    <div class="app dot"><svg viewBox="0 0 24 24"><path d="M.5.500h23v17H.5z" fill="#3b3b3b" stroke="#e0e0e0" stroke-width="1.200"/><path d="M3 4l3 2-3 2M7 9h3" stroke="#fff" fill="none"/><path d="M6 12l6-5 5 5-3 8-3 1z" fill="#e83e3e"/><path d="M15 6l5-2 2 6-4 4-5-3z" fill="#3b7be8"/><path d="M14 15l8-2 1 5-7 4z" fill="#9bd21e"/></svg></div>
    <div class="app dot"><svg viewBox="0 0 24 24"><path d="M1 1h22v11L12 23H1z" fill="#ffd60a"/><path d="M12 12h11v11H12z" fill="#e8a60c"/><path d="M12 12h11L12 23z" fill="#3d3a35"/></svg></div>
    <div class="app dot"><svg viewBox="0 0 24 24"><path d="M3 2h18v19H3z" fill="#4dc2e3"/><path d="M3 20h18v2H3z" fill="#f5f5f5"/><path d="M3 22h18v2H3z" fill="#b3591c"/><path d="M5 .5v3M8.500.500v3M12 .5v3M15.500.500v3M19 .5v3" stroke="#135b7b" stroke-width="1.500"/><path d="M6 7.500h12M6 11.500h12M6 15.500h12" stroke="#126184" stroke-width="1.600"/></svg></div>
  </div>
  <div class="tray">
    <svg class="up line" width="18" height="18" viewBox="0 0 18 18"><path d="M2 12.500L9 5.500l7 7" stroke="#fff" stroke-width="1.800"/></svg>
    <svg class="mic line" width="20" height="24" viewBox="0 0 20 24"><rect x="6.500" y="1" width="7" height="13" rx="3.500" fill="#3277ad" stroke="#8ed0ff" stroke-width="1.500"/><path d="M2.500 10.500q.5 7.500 7.500 7.500t7.500-7.500M10 18v5" stroke="#8ed0ff" stroke-width="1.600"/></svg>
    <div class="lang">ENG<br>IN</div>
    <svg class="wifi line" width="24" height="20" viewBox="0 0 24 20"><g stroke="#fff" stroke-width="1.800"><path d="M1 7.500q11-10.500 22 0M4.500 11q7.500-7 15 0M8 14.500q4-3.500 8 0"/></g><circle cx="12" cy="17.500" r="2" fill="#fff"/></svg>
    <svg class="vol line" width="24" height="20" viewBox="0 0 24 20"><g stroke="#fff" stroke-width="1.600"><path d="M1 7h4l5.500-5v16L5 13H1z"/><path d="M13.500 7q2.500 3 0 6M16.500 4.500q5 5.500 0 11M19.500 2q7 8 0 16"/></g></svg>
    <svg class="bat line" width="24" height="22" viewBox="0 0 24 22"><rect x="3" y="6" width="18" height="13" rx="3" stroke="#fff" stroke-width="1.700"/><path d="M5.500 8.500h13v8h-13z" fill="#fff"/><path d="M22.700 10.500v4" stroke="#fff" stroke-width="2"/><path d="M2 3v3M6 3v3M.500 5h7v3q0 2.500-3.500 2.500T.500 8z" fill="#fff" stroke="#2b2a28"/><path d="M2 .5V5M6 .5V5M4 10v4" stroke="#fff" stroke-width="1.300"/></svg>
    <div class="clock">02:05<br>06-09-2025</div>
  </div>
</div>
</body>
</html>
```

FILE: styles.css
```css
* { box-sizing: border-box; }
body { margin: 0; width: 1920px; height: 1080px; overflow: hidden; display: flex; flex-direction: column; font-family: Roboto, "Liberation Sans", sans-serif; color: #1f1f1f; background: #f9fafe; }
svg { display: block; flex: none; overflow: visible; }
i, em { font-style: normal; }
.defs { position: absolute; width: 0; height: 0; }
.line { fill: none; }
.ink { stroke: #444746; stroke-width: 2; }
.fill { fill: #444746; }
.ic-text { font-family: "Open Sans", sans-serif; }

/* tab strip */
.tabstrip { height: 60px; background: #d5e7cf; display: flex; align-items: center; font: 17px "Open Sans", sans-serif; color: #3c4a38; padding-left: 9px; }
.tab-search { width: 42px; height: 42px; border-radius: 13px; background: #c8ffc0; display: flex; align-items: center; justify-content: center; margin-right: 7px; }
.tab { width: 118.200px; height: 60px; flex: none; display: flex; align-items: center; padding-left: 14px; gap: 12px; }
.tab::after { content: ""; width: 3px; height: 24px; border-radius: 2px; background: #97d694; margin-left: auto; }
.fav { width: 24px; height: 24px; }
.tab span { width: 49px; margin-right: -5px; white-space: nowrap; letter-spacing: -.4px; padding-top: 2px; mask-image: linear-gradient(90deg, #000 50%, transparent 104%); }
.before-active { width: 118px; }
.before-active::after, .active::after { display: none; }
.active { width: 108px; height: 51px; align-self: flex-end; background: #f8fcf1; border-radius: 14px 14px 0 0; padding: 0 0 9px 12px; gap: 17px; position: relative; }
.active::before { content: ""; position: absolute; bottom: 0; left: -14px; right: -14px; height: 14px; background: radial-gradient(circle at 0 0, transparent 14px, #f8fcf1 14.500px) 0 0 / 14px 14px no-repeat, radial-gradient(circle at 14px 0, transparent 14px, #f8fcf1 14.500px) 100% 0 / 14px 14px no-repeat; }
.last { width: 123px; padding-left: 21px; gap: 14px; }
.new-tab { padding-left: 15px; }
.window-controls { margin-left: auto; display: flex; gap: 53px; padding-right: 27px; }

/* browser toolbar */
.tabstrip + .browser-bar { height: 121px; background: #f8fcf1; border-bottom: 1px solid #dfe5d3; border-radius: 12px 12px 0 0; box-shadow: 0 -12px 0 0 #d5e7cf; }
.tabstrip { position: relative; z-index: 1; clip-path: inset(0); }
.address-row { height: 69px; display: flex; align-items: center; padding: 0 19px 0 23px; }
.nav { display: flex; gap: 34px; width: 157px; flex: none; }
.omnibox { width: 1560px; height: 51px; flex: none; border-radius: 26px; background: #e4ece0; display: flex; align-items: center; padding: 0 23px 0 8px; margin-right: 25px; }
.site-info { width: 36px; height: 36px; border-radius: 50%; background: #f8fcf1; display: flex; align-items: center; justify-content: center; margin-right: 11px; }
.url { flex: 1; font: 20px "Open Sans", sans-serif; letter-spacing: .28px; color: #464b43; white-space: nowrap; }
.url b { font-weight: 400; color: #1a1c18; }
.omnibox > svg + svg { margin-left: 23px; }
.omnibox > .line { margin-top: 4px; }
.music { margin-right: 26px; }
.profile { width: 30px; height: 30px; border-radius: 50%; background: #78909c; color: #fff; font-size: 16px; line-height: 31px; text-align: center; margin-right: 25px; }
.bookmarks { height: 42px; display: flex; align-items: center; justify-content: space-between; padding: 0 22px 0 19px; }
.all-bookmarks { height: 24px; border-left: 3px solid #b6f0b0; display: flex; align-items: center; gap: 12px; padding-left: 25px; font: 17px "Open Sans", sans-serif; letter-spacing: -.1px; color: #464b43; }
.all-bookmarks span { margin-top: -2px; }

/* gmail header */
.gmail { flex: 1; display: flex; flex-direction: column; }
.header { height: 97px; display: flex; align-items: center; padding-left: 40px; }
.logo { margin: 0 16px 0 30px; }
.brand { width: 225px; font-size: 33px; color: #444746; padding-top: 3px; }
.search { width: 1080px; height: 72px; border-radius: 36px; background: #e9eef6; display: flex; align-items: center; padding: 0 24px 0 18px; color: #5f6368; font-size: 24px; letter-spacing: .1px; }
.search span { flex: 1; padding-left: 12px; }
.header-actions { display: flex; gap: 27px; margin-left: 123px; fill: #5f6368; }
.gear { margin-left: 3px; }
.avatar { width: 48px; height: 48px; border-radius: 50%; background: #78909c; color: #fff; font-size: 24px; line-height: 50px; text-align: center; margin-left: 30px; }
.body { display: flex; height: 730px; }

/* sidebar */
.sidebar { width: 384px; padding-top: 12px; display: flex; flex-direction: column; font-size: 21px; letter-spacing: .35px; }
.compose { width: 214px; height: 84px; flex: none; margin: 0 0 24px 12px; border-radius: 24px; background: #c2e7ff; color: #001d35; display: flex; align-items: center; padding-left: 27px; gap: 27px; font-weight: 500; letter-spacing: .55px; }
.item { width: 360px; height: 48px; flex: none; display: flex; align-items: center; padding: 0 18px 0 40.500px; gap: 28.500px; border-radius: 0 24px 24px 0; }
.item i { margin-left: auto; font-size: 18px; letter-spacing: 0; color: #5f6368; }
.item.snoozed { letter-spacing: .15px; }
.selected { background: #d3e3fd; color: #001d35; font-weight: 700; }
.selected span, .drafts span { font-weight: 700; letter-spacing: .95px; }
.item.selected i { color: #001d35; }
.item.drafts i { letter-spacing: -1.500px; }
.labels { width: 342px; height: 48px; margin-top: 33px; flex: none; display: flex; align-items: center; justify-content: space-between; padding-left: 39px; font-size: 24px; letter-spacing: .7px; }
.upgrade { width: 322px; height: 48px; margin: 170px 0 0 31px; border-radius: 24px; background: #fff; display: flex; align-items: center; padding: 0 17px 0 24px; letter-spacing: .65px; }
.upgrade span { flex: 1; padding-left: 26px; }

/* reading panel */
.panel { width: 1452px; height: 707px; background: #fff; border-radius: 24px; overflow: hidden; }
.mail-toolbar { height: 72px; margin: 0 26px 0 2px; display: flex; align-items: center; padding: 0 28px 1px 25px; background: #fff; position: relative; z-index: 1; box-shadow: 0 2px 4px rgba(60,64,67,.22); clip-path: inset(0 0 -7px 0); gap: 42px; }
.mail-toolbar .archive { margin-left: 18px; }
.divider { width: 2px; height: 30px; background: #e4e6e9; margin: 0 -10px 0 -11px; }
.mail-toolbar .move { margin-left: -2px; }
.mail-toolbar .fill { margin-left: -8px; }
.count { margin: 0 -7px 0 auto; font-size: 18px; color: #5f6368; }
.mail-toolbar .next { margin-left: -3px; }
.message { height: 635px; overflow: hidden; position: relative; font-family: "Liberation Sans", Arial, sans-serif; }
.report { width: 1296px; margin: -39px 0 0 108px; }
.row { height: 160px; display: grid; grid-template-columns: 582px 223px 267px 224px; align-items: center; text-align: center; border-bottom: 1px solid #ececec; }
.final { border: 0; height: 159px; }
.rule { height: 1px; margin: 0 10px 0 13px; background: #ececec; }
.shaded { background: #f5faff; }
.host { font-weight: 700; font-size: 19.500px; color: #1565c0; }
.metric { padding: 0 21px 1px; display: flex; flex-direction: column; align-items: center; }
.metric p { margin: 0 0 10px; font-size: 19.500px; line-height: 22px; color: #222; }
.bar { width: 100%; height: 15px; border-radius: 8px; background: #ededed; overflow: hidden; }
.bar div { height: 15px; border-radius: 8px; }
.blue { background: #42a5f5; }
.green { background: #66bb6a; }
.metric em { height: 34px; line-height: 34px; padding: 0 12px; border-radius: 17px; background: #43a047; color: #fff; font-weight: 700; font-size: 16.500px; }
.metric small { margin-top: 9px; font-size: 17.550px; line-height: 20px; color: #666; }
.generated { width: 1296px; margin: 38px 0 0 108px; height: 22px; display: flex; align-items: center; justify-content: center; gap: 6px; font-size: 18px; color: #6f6f6f; }
.generated svg { margin-top: 3px; }
.actions { display: flex; gap: 12px; margin: 60px 0 0 108px; font: 500 21px Roboto, sans-serif; letter-spacing: .6px; color: #444746; }
.button { height: 54px; border: 1px solid #747775; border-radius: 27px; display: flex; align-items: center; padding-left: 28px; gap: 15px; }
.reply { width: 156px; }
.forward { width: 167px; padding-left: 21px; }
.emoji { width: 54px; padding-left: 13px; }
.scrollbar { position: absolute; right: 0; top: 438px; width: 17px; height: 166px; background: #cbcbcb; border: 1px solid #b3b3b3; border-right: 0; }

/* side panel */
.sidepanel { width: 84px; padding-top: 28px; display: flex; flex-direction: column; align-items: center; gap: 56px; }
.tasks { margin-top: -1px; }
.contacts { width: 84px; height: 53px; position: relative; margin-top: 2px; }
.contacts i { position: absolute; left: 37px; top: 0; width: 10px; height: 10px; border-radius: 50%; background: #0b57d0; }
.float { position: absolute; left: 27px; top: 0; width: 59px; height: 53px; border: 2px solid #bdbfc2; border-radius: 27px 0 0 27px; background: rgba(243,244,246,.85); padding: 4px 0 0 5px; }
.sidepanel hr { width: 30px; height: 1px; border: 0; background: #dcdee1; margin: -30px 0 0; }
.hide { margin-top: 187px; }

/* taskbar */
.taskbar { height: 72px; background: #2b2a28; border-top: 2px solid #4a4a4b; display: flex; color: #fff; font: 17px "Open Sans", sans-serif; }
.weather { width: 406.500px; padding: 16px 0 0 29px; position: relative; }
.weather b { position: absolute; left: 46px; top: 9px; width: 25px; height: 23px; border-radius: 12px; background: #c42b1c; font-size: 15px; font-weight: 400; line-height: 22px; text-align: center; }
.apps { display: flex; }
.app { width: 48px; height: 70px; padding: 22px 12px 0; position: relative; }
.app.start { margin-right: 1.500px; }
.app svg { width: 24px; height: 24px; }
.dot::after { content: ""; display: block; width: 6px; height: 5px; border-radius: 3px; background: #9d9d9d; margin: 12px auto 0; }
.current svg { position: relative; }
.current::before { content: ""; position: absolute; left: 3px; top: 4px; width: 41px; height: 60px; border: 1px solid #464543; border-right-width: 2px; border-radius: 7px; background: linear-gradient(90deg, #3a3938 35px, #2b2a28 36px); }
.current::after { content: ""; display: block; width: 16px; height: 5px; border-radius: 3px; background: #4cc2ff; margin: 12px auto 0; position: relative; }
.tray { flex: 1; display: flex; align-items: center; line-height: 23px; padding: 0 28px 0 102px; font-size: 17px; letter-spacing: -.2px; }
.mic { margin-left: 29px; }
.lang { width: 48px; text-align: center; margin: 0 21px 0 23px; }
.wifi, .vol { margin-right: 12px; }
.clock { margin-left: auto; text-align: right; letter-spacing: .3px; line-height: 24px; margin-top: -1px; }
```
